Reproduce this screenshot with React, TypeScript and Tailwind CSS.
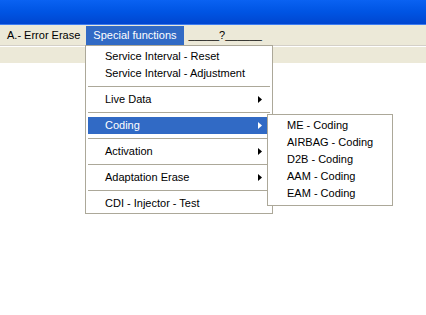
import React from 'react';

const font = { fontFamily: '"Liberation Sans", Arial, sans-serif' };

type Item = { label: string; arrow?: boolean; active?: boolean } | 'sep';

const mainItems: Item[] = [
  { label: 'Service Interval - Reset' },
  { label: 'Service Interval - Adjustment' },
  'sep',
  { label: 'Live Data', arrow: true },
  'sep',
  { label: 'Coding', arrow: true, active: true },
  'sep',
  { label: 'Activation', arrow: true },
  'sep',
  { label: 'Adaptation Erase', arrow: true },
  'sep',
  { label: 'CDI - Injector - Test' },
];

const subItems = ['ME - Coding', 'AIRBAG - Coding', 'D2B - Coding', 'AAM - Coding', 'EAM - Coding'];

function Arrow({ white }: { white?: boolean }) {
  return (
    <svg width="4" height="7" viewBox="0 0 4 7" className="absolute right-[8px] top-[5px]">
      <path d="M0 0 L4 3.5 L0 7 Z" fill={white ? '#ffffff' : '#000000'} />
    </svg>
  );
}

export default function App() {
  return (
    <div className="relative w-[426px] h-[315px] bg-white overflow-hidden text-[11px] text-black" style={font}>
      {/* title bar */}
      <div className="h-[25px] bg-gradient-to-b from-[#0a62f2] via-[#0054e3] to-[#0046d0] border-b border-[#3d7cf0]" />

      {/* menubar */}
      <div className="h-[20px] bg-[#ece9d8] flex items-stretch pt-px">
        <div className="pl-[7px] pr-[6px] flex items-center">A.- Error Erase</div>
        <div className="px-[7px] flex items-center bg-[#316ac5] text-white">Special functions</div>
        <div className="pl-[5px] flex items-center">_____?______</div>
      </div>

      {/* toolbar strip */}
      <div className="h-[18px] bg-[#ece9d8] border-t border-[#d4d0c8] shadow-[inset_0_1px_0_#ffffff]" />

      {/* dropdown */}
      <div className="absolute left-[85px] top-[45px] w-[188px] bg-white border border-[#aca899] pt-[2px] pb-[1px] px-[2px]">
        {mainItems.map((it, i) =>
          it === 'sep' ? (
            <div key={i} className="h-[9px] flex items-center">
              <div className="h-px w-full bg-[#aca899]" />
            </div>
          ) : (
            <div
              key={i}
              className={`relative h-[17px] flex items-center pl-[17px] ${it.active ? 'bg-[#316ac5] text-white' : ''}`}
            >
              {it.label}
              {it.arrow && <Arrow white={it.active} />}
            </div>
          )
        )}
      </div>

      {/* submenu */}
      <div className="absolute left-[267px] top-[114px] w-[126px] bg-white border border-[#aca899] pt-[2px] pb-[3px] px-[2px]">
        {subItems.map((s) => (
          <div key={s} className="h-[17px] flex items-center pl-[17px]">
            {s}
          </div>
        ))}
      </div>
    </div>
  );
}
